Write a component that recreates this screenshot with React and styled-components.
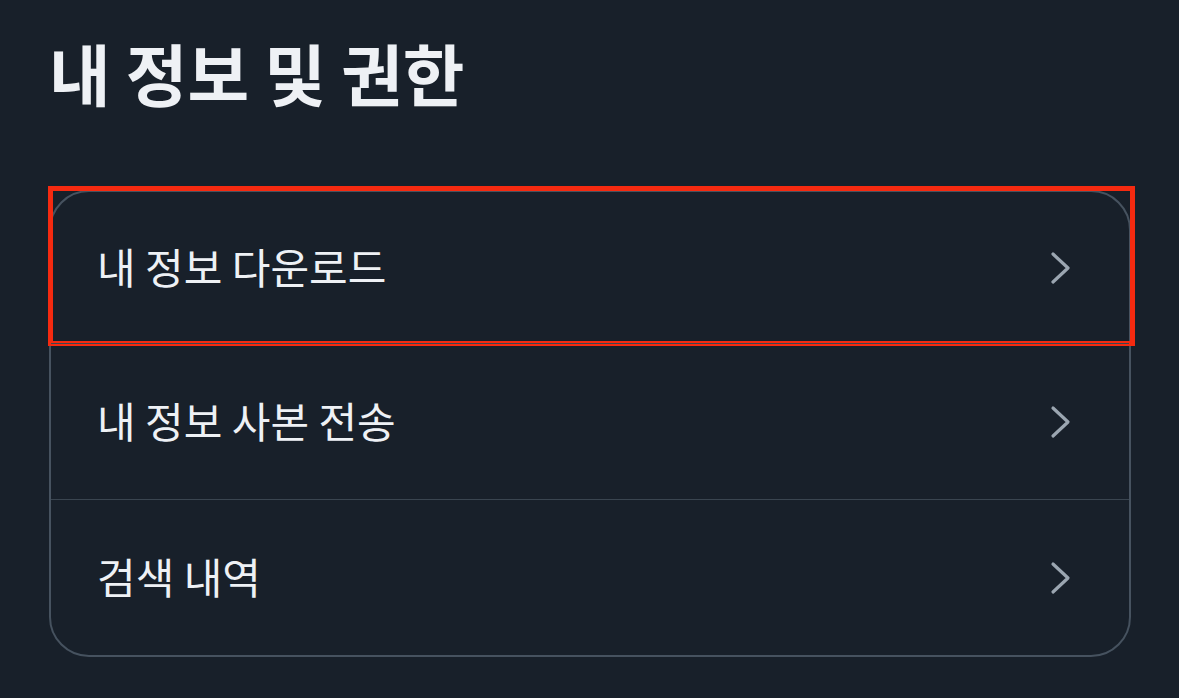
import React from "react"
import styled, { createGlobalStyle } from "styled-components"

const GlobalStyle = createGlobalStyle`
  html, body {
    margin: 0;
    padding: 0;
    background: #18202a;
  }
  body {
    font-family: "Noto Sans CJK KR", "Noto Sans", sans-serif;
    color: #eef1f5;
  }
`

const items = [
  { label: "내 정보 다운로드", highlighted: true },
  { label: "내 정보 사본 전송" },
  { label: "검색 내역" },
]

const Chevron = () => (
  <svg width="22" height="34" viewBox="0 0 22 34" fill="none">
    <path
      d="M3 3 L18 17 L3 31"
      stroke="#9ba6b1"
      strokeWidth="3.2"
      strokeLinecap="round"
      strokeLinejoin="round"
    />
  </svg>
)

const App = () => {
  return (
    <>
      <GlobalStyle />
      <Page>
        <Title>내 정보 및 권한</Title>
        <Card>
          {items.map((item, i) => (
            <Row key={item.label} $first={i === 0}>
              <Label>{item.label}</Label>
              <Chevron />
              {item.highlighted && <Highlight />}
            </Row>
          ))}
        </Card>
      </Page>
    </>
  )
}

export default App

const Page = styled.div`
  width: 1179px;
  height: 698px;
  box-sizing: border-box;
  padding: 28px 48px 0 49px;
  display: flex;
  flex-direction: column;
  gap: 74px;
  overflow: hidden;
`

const Title = styled.h1`
  margin: 0;
  font-size: 67px;
  font-weight: 700;
  line-height: 88px;
  color: #eef1f5;
  letter-spacing: 0;
`

const Card = styled.div`
  border: 2px solid #46525f;
  border-radius: 40px;
  display: flex;
  flex-direction: column;
`

const Row = styled.div`
  position: relative;
  height: ${props => (props.$first ? "151px" : "155px")};
  display: flex;
  align-items: center;
  justify-content: space-between;
  padding: 0 57px 0 46px;
  border-top: ${props => (props.$first ? "none" : "1px solid #3a4550")};
`

const Label = styled.span`
  font-size: 42px;
  font-weight: 400;
  color: #eef1f5;
  padding-bottom: 4px;
`

const Highlight = styled.div`
  position: absolute;
  left: -3px;
  right: -6px;
  top: -6px;
  bottom: -3px;
  border: 5px solid #f52a10;
  pointer-events: none;
`
